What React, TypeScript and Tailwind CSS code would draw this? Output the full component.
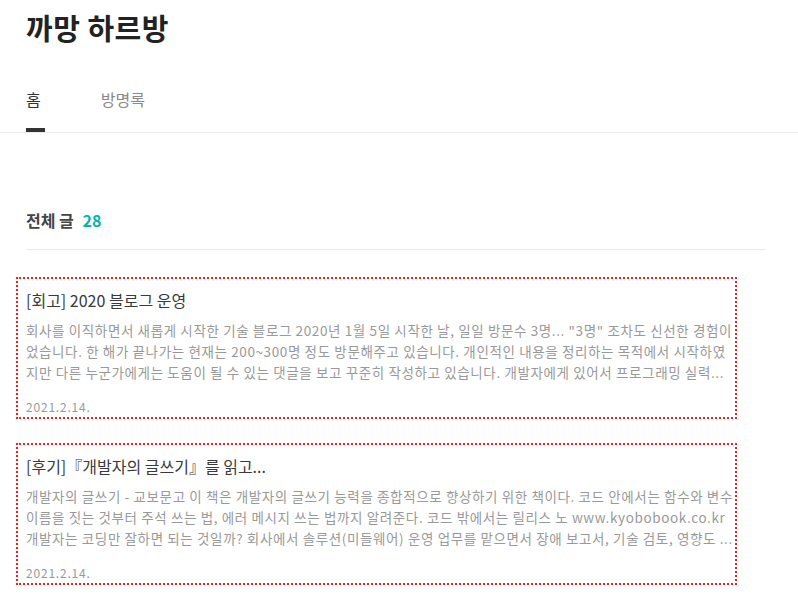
const posts = [
  {
    title: '[회고] 2020 블로그 운영',
    lines: [
      '회사를 이직하면서 새롭게 시작한 기술 블로그 2020년 1월 5일 시작한 날, 일일 방문수 3명... "3명" 조차도 신선한 경험이',
      '었습니다. 한 해가 끝나가는 현재는 200~300명 정도 방문해주고 있습니다. 개인적인 내용을 정리하는 목적에서 시작하였',
      '지만 다른 누군가에게는 도움이 될 수 있는 댓글을 보고 꾸준히 작성하고 있습니다. 개발자에게 있어서 프로그래밍 실력...',
    ],
    date: '2021.2.14.',
  },
  {
    title: '[후기]『개발자의 글쓰기』를 읽고...',
    lines: [
      '개발자의 글쓰기 - 교보문고 이 책은 개발자의 글쓰기 능력을 종합적으로 향상하기 위한 책이다. 코드 안에서는 함수와 변수',
      '이름을 짓는 것부터 주석 쓰는 법, 에러 메시지 쓰는 법까지 알려준다. 코드 밖에서는 릴리스 노 www.kyobobook.co.kr',
      '개발자는 코딩만 잘하면 되는 것일까? 회사에서 솔루션(미들웨어) 운영 업무를 맡으면서 장애 보고서, 기술 검토, 영향도 ...',
    ],
    date: '2021.2.14.',
  },
];

export default function App() {
  return (
    <div className="min-h-screen bg-white font-['Noto_Sans_CJK_KR','Noto_Sans',sans-serif] text-[#333]">
      <header className="border-b border-[#ebebeb]">
        <div className="px-[26px]">
          <h1 className="pt-[7px] text-[29px] font-bold leading-[40px] text-[#222] tracking-[0.5px]">까망 하르방</h1>
          <nav className="mt-[42px] flex gap-[60px] text-[16px] leading-[20px]">
            <a className="relative block h-[43px] text-[#333]">
              홈
              <span className="absolute bottom-0 left-0 h-[4px] w-[19px] bg-[#333]" />
            </a>
            <a className="block h-[43px] text-[#888]">방명록</a>
          </nav>
        </div>
      </header>

      <main>
        <div className="mx-[26px] w-[740px] border-b border-[#ebebeb] pt-[77px] pb-[19px]">
          <h2 className="text-[16px] font-bold leading-[20px] text-[#444]">
            전체 글 <span className="ml-[5px] text-[#00b5b0]">28</span>
          </h2>
        </div>

        <ul className="mt-[27px] flex flex-col gap-[24px] pl-[16px]">
          {posts.map((post, index) => (
            <li
              key={index}
              className="h-[142px] w-[721px] border-2 border-dotted border-[#ff1a1a] pl-[8px] pt-[10px]"
            >
              <div className="text-[16px] leading-[22px] text-[#3a3a3a]">{post.title}</div>
              <div className="mt-[9px] whitespace-nowrap text-[13.5px] leading-[21px] tracking-[0.62px] text-[#999]">
                {post.lines.map((line, i) => (
                  <div key={i}>{line}</div>
                ))}
              </div>
              <div className="mt-[16px] text-[12px] leading-[16px] tracking-[0.8px] text-[#999]">{post.date}</div>
            </li>
          ))}
        </ul>
      </main>
    </div>
  );
}
